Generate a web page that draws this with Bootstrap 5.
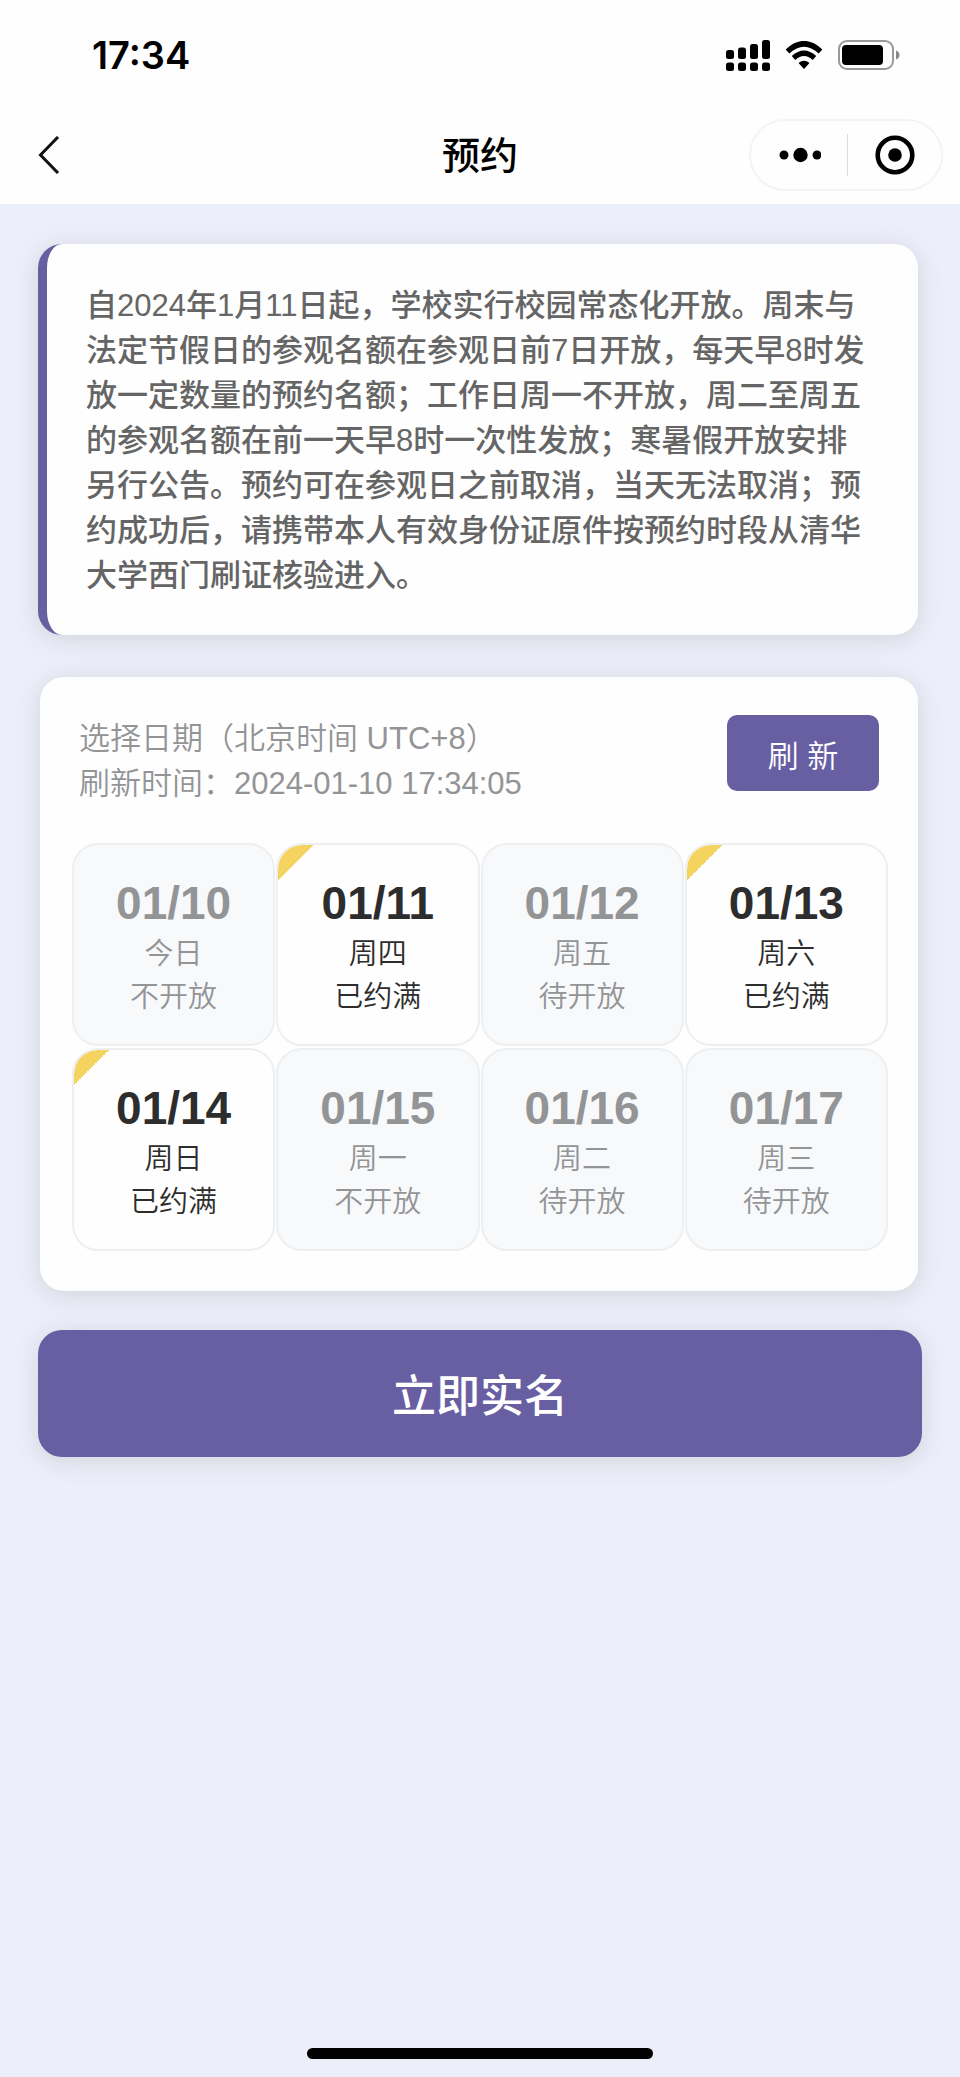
<!DOCTYPE html>
<html lang="zh-CN">
<head>
<meta charset="utf-8">
<meta name="viewport" content="width=device-width, initial-scale=1">
<title>预约</title>
<link rel="stylesheet" href="https://cdn.jsdelivr.net/npm/bootstrap@5.3.0/dist/css/bootstrap.min.css">
<style>
:root { --brand: #685fa2; --page: #eceefa; --soft: #939496; --edge: #eeeff1; --lift: 0 4px 24px rgba(100, 100, 80, .18); }
body { background: var(--page); font-family: "Liberation Sans", "Noto Sans CJK SC", sans-serif; font-size: 31px; line-height: 45px; color: #2d2d2d; }
svg { display: block; }
.top-area { background: #fefefe; padding-bottom: 4px; }
.status-row { height: 110px; padding: 0 60px 0 92px; }
.clock { font-family: Inter, sans-serif; font-size: 38px; font-weight: 600; color: #000; }
.status-icons { gap: 15px; }
.title-row { display: grid; grid-template-columns: 1fr auto 1fr; align-items: center; height: 90px; padding: 0 17px; }
.title-row h1 { font-size: 38px; line-height: 45px; font-weight: 500; color: #000; padding-top: 2px; }
.back-btn { justify-self: start; margin-left: 21px; }
.capsule { width: 194px; height: 72px; border: 2px solid #f4f4f4; border-radius: 36px; }
.capsule .divide { width: 1px; height: 42px; background: #dcdcdc; }
.plain-btn { border: 0; background: none; padding: 0; }
.content { padding: 40px 38px 0; gap: 39px; }
.panel { background: #fefefe; border: 0; border-radius: 24px; box-shadow: var(--lift); margin-right: 4px; }
.notice { border-left: 9px solid var(--brand); padding: 39px 42px 37px 39px; color: #656565; font-weight: 500; }
.dates { margin-left: 2px; margin-top: 3px; padding: 38px 30px 40px 32px; }
.dates-head { color: var(--soft); padding: 0 9px 0 7px; margin-bottom: 36px; font-weight: 350; }
.dates-text { padding-top: 1px; padding-bottom: 1px; }
.btn-brand { --bs-btn-color: #fff; --bs-btn-bg: var(--brand); --bs-btn-hover-color: #fff; --bs-btn-hover-bg: #5a5192; --bs-btn-active-color: #fff; --bs-btn-active-bg: #5a5192; border: 0; }
.btn-refresh { width: 152px; height: 76px; font-size: 31px; font-weight: 350; border-radius: 10px; padding: 8px 0 0; }
.btn-verify { height: 127px; font-size: 44px; font-weight: 500; border-radius: 24px; box-shadow: var(--lift); padding: 10px 0 4px; }
.day-grid { display: grid; grid-template-columns: repeat(4, 1fr); gap: 2px 1px; }
.day { height: 203px; border: 2px solid var(--edge); border-radius: 26px; background: #fefefe; color: #2d2d2d; font-size: 29px; line-height: 43px; font-weight: 350; padding: 2px 0 0; }
.day strong { font-size: 46px; line-height: 60px; font-weight: 700; }
.day:disabled { background: #f8f9fb; color: var(--soft); }
.day-full { background: linear-gradient(135deg, #f4d35f 50%, transparent 50%) 0 0 / 35px 35px no-repeat padding-box #fefefe; }
.home-bar { width: 36%; height: 11px; border-radius: 6px; background: #000; margin-bottom: 18px; }
</style>
</head>
<body>
<div class="min-vh-100 d-flex flex-column">
  <header class="top-area">
    <div class="status-row d-flex align-items-center justify-content-between">
      <span class="clock">17:34</span>
      <div class="status-icons d-flex align-items-center">
        <svg width="44" height="31" viewBox="0 0 44 31" aria-hidden="true">
          <rect x="0" y="10" width="8" height="9" rx="2.500"/><rect x="12" y="7.500" width="8" height="11.500" rx="2.500"/><rect x="24" y="4" width="8" height="15" rx="2.500"/><rect x="36" y="0" width="8" height="19" rx="2.500"/>
          <rect x="0" y="22.500" width="8" height="8.500" rx="2.500"/><rect x="12" y="22.500" width="8" height="8.500" rx="2.500"/><rect x="24" y="22.500" width="8" height="8.500" rx="2.500"/><rect x="36" y="22.500" width="8" height="8.500" rx="2.500"/>
        </svg>
        <svg width="38" height="28" viewBox="0 0 38 28" aria-hidden="true">
          <path d="M2.500 10.500Q19-5 35.500 10.500" fill="none" stroke="#000" stroke-width="5.500"/>
          <path d="M8.500 17Q19 7.500 29.500 17" fill="none" stroke="#000" stroke-width="5.200"/>
          <path d="M13.500 22Q19 17.500 24.500 22L19 28Z"/>
        </svg>
        <svg width="62" height="30" viewBox="0 0 62 30" aria-hidden="true">
          <rect x="1" y="1" width="54" height="28" rx="8" fill="none" stroke="#999" stroke-width="2"/>
          <rect x="4" y="5" width="41" height="20" rx="4"/>
          <path d="M58 10.500q3.500 1.500 3.500 4.500t-3.500 4.500z" fill="#888"/>
        </svg>
      </div>
    </div>
    <nav class="title-row">
      <button class="plain-btn back-btn" type="button" aria-label="返回">
        <svg width="22" height="38" viewBox="0 0 22 38"><path d="M20 1L2.500 19L20 37" fill="none" stroke="#111" stroke-width="3"/></svg>
      </button>
      <h1 class="m-0">预约</h1>
      <div class="capsule d-flex align-items-center ms-auto">
        <button class="plain-btn flex-fill d-flex justify-content-center" type="button" aria-label="更多">
          <svg width="43" height="16" viewBox="0 0 43 16"><circle cx="6" cy="8" r="4.500"/><circle cx="22.500" cy="8" r="7.200"/><circle cx="39" cy="8" r="4.500"/></svg>
        </button>
        <span class="divide"></span>
        <button class="plain-btn flex-fill d-flex justify-content-center" type="button" aria-label="关闭">
          <svg width="40" height="40" viewBox="0 0 40 40"><circle cx="20" cy="20" r="17.300" fill="none" stroke="#000" stroke-width="4.600"/><circle cx="20" cy="20" r="6.800"/></svg>
        </button>
      </div>
    </nav>
  </header>

  <main class="content d-flex flex-column">
    <section class="panel notice">
      <p class="m-0">自2024年1月11日起，学校实行校园常态化开放。周末与法定节假日的参观名额在参观日前7日开放，每天早8时发放一定数量的预约名额；工作日周一不开放，周二至周五的参观名额在前一天早8时一次性发放；寒暑假开放安排另行公告。预约可在参观日之前取消，当天无法取消；预约成功后，请携带本人有效身份证原件按预约时段从清华大学西门刷证核验进入。</p>
    </section>

    <section class="panel dates">
      <div class="dates-head d-flex align-items-start justify-content-between">
        <div class="dates-text">
          <div>选择日期（北京时间 UTC+8）</div>
          <div>刷新时间：2024-01-10 17:34:05</div>
        </div>
        <button class="btn btn-brand btn-refresh" type="button">刷 新</button>
      </div>
      <div class="day-grid">
        <button type="button" class="day d-flex flex-column align-items-center justify-content-center" disabled><strong>01/10</strong><span>今日</span><span>不开放</span></button>
        <button type="button" class="day day-full d-flex flex-column align-items-center justify-content-center"><strong>01/11</strong><span>周四</span><span>已约满</span></button>
        <button type="button" class="day d-flex flex-column align-items-center justify-content-center" disabled><strong>01/12</strong><span>周五</span><span>待开放</span></button>
        <button type="button" class="day day-full d-flex flex-column align-items-center justify-content-center"><strong>01/13</strong><span>周六</span><span>已约满</span></button>
        <button type="button" class="day day-full d-flex flex-column align-items-center justify-content-center"><strong>01/14</strong><span>周日</span><span>已约满</span></button>
        <button type="button" class="day d-flex flex-column align-items-center justify-content-center" disabled><strong>01/15</strong><span>周一</span><span>不开放</span></button>
        <button type="button" class="day d-flex flex-column align-items-center justify-content-center" disabled><strong>01/16</strong><span>周二</span><span>待开放</span></button>
        <button type="button" class="day d-flex flex-column align-items-center justify-content-center" disabled><strong>01/17</strong><span>周三</span><span>待开放</span></button>
      </div>
    </section>

    <button class="btn btn-brand btn-verify w-100" type="button">立即实名</button>
  </main>

  <div class="home-bar mt-auto mx-auto"></div>
</div>
<script src="https://cdn.jsdelivr.net/npm/bootstrap@5.3.0/dist/js/bootstrap.bundle.min.js"></script>
</body>
</html>
